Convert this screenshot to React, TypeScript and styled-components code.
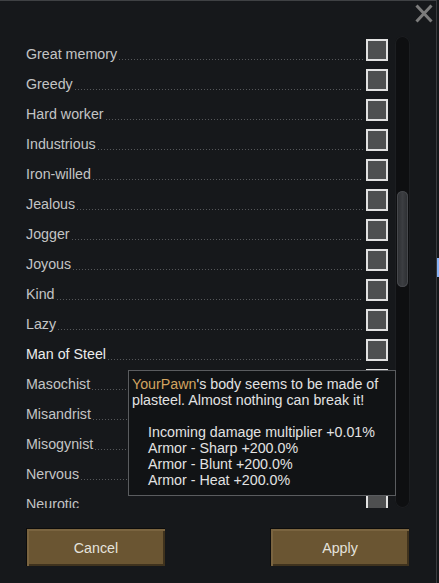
import React from 'react';
import styled, { createGlobalStyle } from 'styled-components';

const traits = [
  'Great memory',
  'Greedy',
  'Hard worker',
  'Industrious',
  'Iron-willed',
  'Jealous',
  'Jogger',
  'Joyous',
  'Kind',
  'Lazy',
  'Man of Steel',
  'Masochist',
  'Misandrist',
  'Misogynist',
  'Nervous',
  'Neurotic',
];

const GlobalStyle = createGlobalStyle`
  html, body {
    margin: 0;
    padding: 0;
    background: #121316;
  }
  body {
    font-family: "Liberation Sans", Arial, sans-serif;
  }
`;

const Page = styled.div`
  display: flex;
  width: 439px;
  height: 583px;
  overflow: hidden;
`;

const Window = styled.div`
  position: relative;
  width: 437px;
  height: 583px;
  background: #16181b;
  border-top: 1px solid #3f4144;
  border-right: 1px solid #3a3c3f;
  box-sizing: border-box;
  display: flex;
  flex-direction: column;
`;

const Edge = styled.div`
  width: 2px;
  background: #15171a;
  display: flex;
  flex-direction: column;
`;

const EdgeMark = styled.div`
  margin-top: 258px;
  height: 19px;
  background: #8ab4f8;
`;

const Header = styled.div`
  height: 35px;
  display: flex;
  justify-content: flex-end;
  align-items: flex-start;
  padding: 3px 3px 0 0;
  box-sizing: border-box;
`;

const CloseButton = styled.div`
  width: 18px;
  height: 19px;
  cursor: pointer;
`;

const ScrollView = styled.div`
  height: 472px;
  overflow: hidden;
  display: flex;
  padding-left: 26px;
`;

const List = styled.div`
  width: 362px;
  display: flex;
  flex-direction: column;
`;

const Row = styled.div`
  height: 30px;
  flex-shrink: 0;
  display: flex;
  align-items: flex-start;
`;

const Label = styled.span<{ $hot?: boolean }>`
  margin-top: 10px;
  font-size: 14.25px;
  line-height: 17px;
  color: ${p => (p.$hot ? '#ececec' : '#c3c4c5')};
  white-space: nowrap;
`;

const Dots = styled.div`
  flex: 1;
  height: 1px;
  margin: 23px 3px 0 2px;
  background-image: linear-gradient(to right, #55575a 1px, transparent 1px);
  background-size: 3px 1px;
`;

const Checkbox = styled.div`
  margin-top: 3px;
  width: 22px;
  height: 22px;
  box-sizing: border-box;
  border: 2px solid #e2e2e2;
  background: #4e4f50;
`;

const Track = styled.div`
  margin-left: 7px;
  width: 15px;
  height: 472px;
  border-radius: 8px;
  background: #0e0f11;
  box-shadow: inset 0 0 0 1px #1c1e21;
  display: flex;
  justify-content: center;
`;

const Thumb = styled.div`
  margin-top: 155px;
  width: 11px;
  height: 96px;
  border-radius: 6px;
  background: linear-gradient(to right, #2c2e31, #3c3e42 50%, #2c2e31);
  box-shadow: inset 0 0 0 1px #46484c;
`;

const Footer = styled.div`
  display: flex;
  justify-content: space-between;
  padding: 20px 27px 0 26px;
`;

const Button = styled.div`
  width: 139px;
  height: 38px;
  box-sizing: border-box;
  display: flex;
  align-items: center;
  justify-content: center;
  background: #6a5532;
  border-top: 1px solid #0c0c0c;
  border-left: 1px solid #0c0c0c;
  box-shadow: inset 2px 2px 0 #7a6440, inset -2px -2px 0 #3f321d;
  color: #e4e2dc;
  font-size: 14.25px;
  cursor: pointer;
`;

const Tooltip = styled.div`
  position: absolute;
  left: 128px;
  top: 369px;
  width: 268px;
  height: 126px;
  box-sizing: border-box;
  padding: 5px 3px 0 3px;
  background: #111315;
  border: 1px solid #5a5c5f;
  color: #e2e2e2;
  font-size: 14.25px;
  line-height: 16px;
`;

const Pawn = styled.span`
  color: #d2a460;
`;

const Gap = styled.div`
  height: 16px;
`;

const Stat = styled.div`
  padding-left: 16px;
  white-space: nowrap;
`;

const stats = [
  'Incoming damage multiplier +0.01%',
  'Armor - Sharp +200.0%',
  'Armor - Blunt +200.0%',
  'Armor - Heat +200.0%',
];

const App = () => {
  return (
    <Page>
      <GlobalStyle />
      <Window>
        <Header>
          <CloseButton>
            <svg width="18" height="19" viewBox="0 0 18 19">
              <path d="M1.5 1.5 L16.5 17.5 M16.5 1.5 L1.5 17.5" stroke="#7c7c7c" strokeWidth="3" />
            </svg>
          </CloseButton>
        </Header>

        <ScrollView>
          <List>
            {traits.map(name => (
              <Row key={name}>
                <Label $hot={name === 'Man of Steel'}>{name}</Label>
                <Dots />
                <Checkbox />
              </Row>
            ))}
          </List>
          <Track>
            <Thumb />
          </Track>
        </ScrollView>

        <Footer>
          <Button>Cancel</Button>
          <Button>Apply</Button>
        </Footer>

        <Tooltip>
          <div><Pawn>YourPawn</Pawn>'s body seems to be made of</div>
          <div>plasteel. Almost nothing can break it!</div>
          <Gap />
          {stats.map(s => (
            <Stat key={s}>{s}</Stat>
          ))}
        </Tooltip>
      </Window>
      <Edge>
        <EdgeMark />
      </Edge>
    </Page>
  );
};

export default App;
